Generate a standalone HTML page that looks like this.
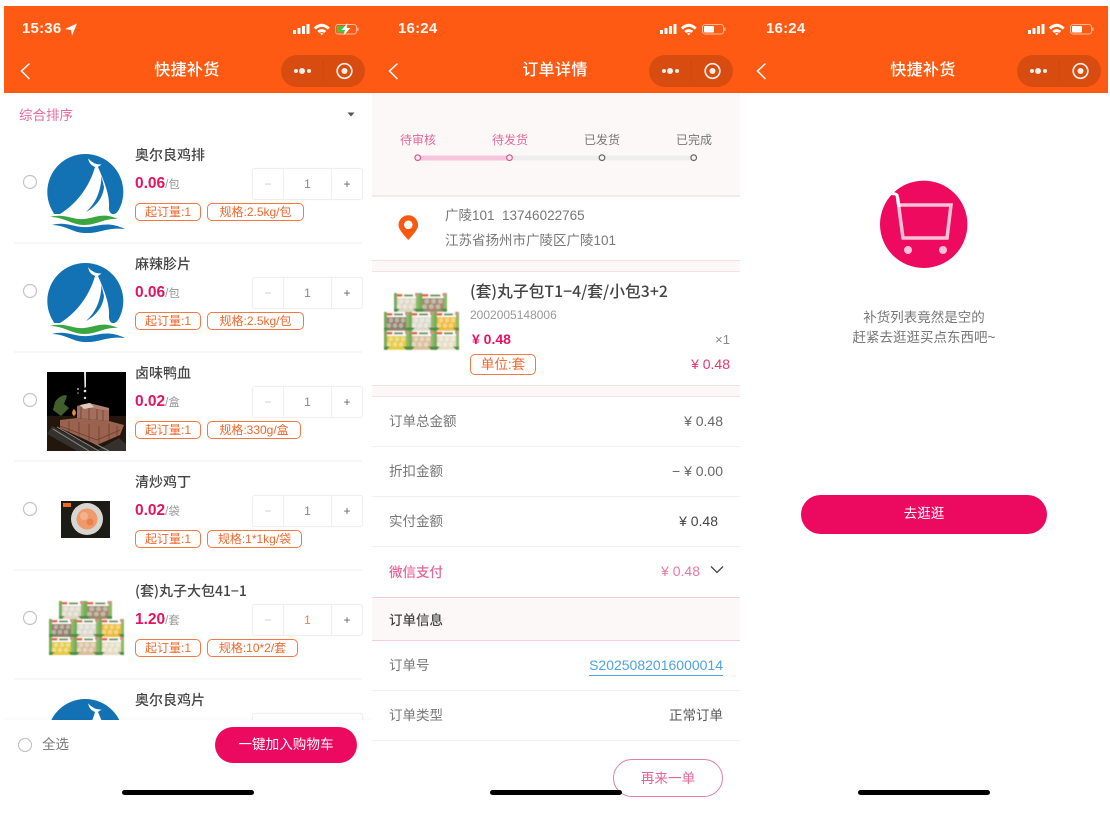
<!DOCTYPE html>
<html lang="zh"><head><meta charset="utf-8"><title>快捷补货</title>
<style>
html,body{margin:0;padding:0;background:#fff}
body{position:relative;width:1110px;height:815px;overflow:hidden;font-family:"Liberation Sans","Noto Sans CJK SC",sans-serif}
.a{position:absolute}
.t{position:absolute;white-space:nowrap;line-height:20px;height:20px}
.m{font-family:"Noto Sans CJK SC","Liberation Sans",sans-serif;font-weight:500}
.hd{position:absolute;top:6px;height:87px;background:#fe5a13}
.title{position:absolute;top:61px;width:120px;text-align:center;color:#fff;font-size:16px;line-height:20px;font-weight:500;letter-spacing:.4px}
.time{position:absolute;top:19px;color:#fff;font-size:15px;line-height:20px;font-weight:700;letter-spacing:.2px;opacity:.95}
.row{position:absolute;left:0;width:372px;height:109px}
.name{position:absolute;left:135px;top:145px;line-height:20px;font-size:14px;color:#444;white-space:nowrap;font-family:"Noto Sans CJK SC","Liberation Sans",sans-serif;font-weight:500}
.price{position:absolute;left:135px;top:174px;line-height:20px;font-size:15.500px;font-weight:700;color:#e5135f;white-space:nowrap}
.price span{font-size:11.500px;font-weight:400;color:#999}
.tag{position:absolute;top:203px;height:16px;line-height:16px;border:1.200px solid #ef7a45;border-radius:5px;color:#f0672c;font-size:12px;text-align:center;white-space:nowrap}
.st{position:absolute;left:252px;top:168px;width:109px;height:30px;border:1px solid #efefef;border-radius:3px;box-shadow:0 0 1px #f0f0f0}
.st i{position:absolute;top:0;bottom:0;width:1px;background:#efefef}
.st b{position:absolute;top:0;line-height:30px;font-weight:400;font-size:12px;text-align:center}
.line{position:absolute;left:14px;width:348px;height:2px;background:#f7f7f7;top:242px}
.sep{position:absolute;left:372px;width:368px;height:1px}
.lb{position:absolute;left:389px;font-size:13.500px;line-height:20px;color:#777;white-space:nowrap;margin-top:1px}
.rt{position:absolute;font-size:14px;line-height:20px;color:#666;white-space:nowrap;text-align:right}
.step{position:absolute;top:130px;width:60px;text-align:center;font-size:12px;line-height:20px}
.bar{position:absolute;top:790px;width:132px;height:5px;border-radius:3px;background:#000}
</style></head><body>

<div class="hd" style="left:4px;width:368px"></div>
<div class="hd" style="left:372px;width:368px"></div>
<div class="hd" style="left:740px;width:368px"></div>

<!-- panel 2 tinted backgrounds -->
<div class="a" style="left:372px;top:93px;width:368px;height:103px;background:#fdf8f8"></div>
<div class="sep" style="top:195px;height:2px;background:#f9e6ea"></div>
<div class="a" style="left:372px;top:261px;width:368px;height:10px;background:#fdf8f8"></div>
<div class="sep" style="top:260px;background:#f6dfe5"></div>
<div class="sep" style="top:271px;background:#f6dfe5"></div>
<div class="a" style="left:372px;top:386px;width:368px;height:10px;background:#fdf8f8"></div>
<div class="sep" style="top:385px;background:#f6dfe5"></div>
<div class="sep" style="top:396px;background:#f6dfe5"></div>
<div class="sep" style="top:446px;background:#f0f0f0"></div>
<div class="sep" style="top:496px;background:#f0f0f0"></div>
<div class="sep" style="top:546px;background:#f0f0f0"></div>
<div class="a" style="left:372px;top:597px;width:368px;height:44px;background:#fdf8f8"></div>
<div class="sep" style="top:597px;background:#f7cdd9"></div>
<div class="sep" style="top:640px;background:#f7cdd9"></div>
<div class="sep" style="top:690px;background:#f0f0f0"></div>
<div class="sep" style="top:740px;background:#f0f0f0"></div>

<!-- graphics -->
<svg class="a" style="left:0;top:0" width="1110" height="815" viewBox="0 0 1110 815">
<defs>
<filter id="bl" x="-5%" y="-5%" width="110%" height="110%"><feGaussianBlur stdDeviation=".5"/></filter>
<filter id="bl2" x="-2%" y="-2%" width="104%" height="104%"><feGaussianBlur stdDeviation=".35"/></filter>
<g id="cap">
  <rect x="281" y="55" width="84" height="32" rx="16" fill="#000" opacity=".15"/>
  <rect x="322.500" y="60" width="1" height="22" fill="#000" opacity=".06"/>
  <circle cx="296" cy="71" r="2" fill="#fff" opacity=".9"/><circle cx="302" cy="71" r="3" fill="#fff" opacity=".9"/><circle cx="309" cy="71" r="2" fill="#fff" opacity=".9"/>
  <circle cx="344.500" cy="71" r="7.300" fill="none" stroke="#fff" stroke-width="1.700" opacity=".9"/><circle cx="344.500" cy="71" r="3" fill="#fff" opacity=".9"/>
  <path d="M29.500 63.500 L21.500 71 L29.500 79" fill="none" stroke="#fff" stroke-width="1.500"/>
</g>
<g id="sig">
  <rect x="293" y="30" width="3" height="4" rx=".5" fill="#fff"/><rect x="297.500" y="28" width="3" height="6" rx=".5" fill="#fff"/><rect x="302" y="26" width="3" height="8" rx=".5" fill="#fff"/><rect x="306.500" y="24" width="3" height="10" rx=".5" fill="#fff"/>
  <path d="M313.800 27.500 C319 22.500 324.500 22.500 329.700 27.500 L327.700 29.600 C323.500 26 320 26 315.800 29.600 Z M317.300 31 C320 28.500 323.500 28.500 326.200 31 L324.300 32.900 C323 31.800 320.500 31.800 319.200 32.900 Z M320.100 33.500 C321 32.800 322.500 32.800 323.400 33.500 L321.750 35.300 Z" fill="#fff"/>
</g>
<g id="logo">
  <circle cx="39.300" cy="39" r="38" fill="#1272b4"/>
  <path d="M49 14 C44 32 32 50 14 61 L0 61 L0 80 L80 80 L80 50 L72 58 C69 63 63 62 63 55 C64 42 58 28 52 14 Z" fill="#fff"/>
  <path d="M55.500 23 C55 38 50 50 40 59 C48 55 57 46 58 34 Z" fill="#1272b4"/>
  <path d="M43 7 C44 11 47 13 51 14 L54 12 C50 12 46 10 43 7 Z" fill="#fff" stroke="#fff"/>
  <path d="M4 64 C18 60 26 67 38 66 C50 65 56 59 72 66 C58 65 52 72 38 72 C26 72 18 64 4 64 Z" fill="#3ba63f"/>
  <path d="M6 72 C20 68 28 75 42 74 C54 73 62 68 79 76 C62 74 54 80 42 80 C28 81 20 72 6 72 Z" fill="#1272b4"/>
</g>
<g id="tile">
  <rect x="0" y="4" width="25" height="14"/>
  <rect x="2" y="0" width="21" height="5" fill="#fbfbf6"/>
  <path d="M0 0 H3 V18 H0 Z" fill="#74ad5a"/><path d="M22 0 H25 V18 H22 Z" fill="#8bbb68"/>
  <path d="M0 15 H6 L3 18 H0 Z M19 15 H25 V18 H22 Z" fill="#4f8f45"/>
  <rect x="2.500" y="1" width="6" height="2.500" rx="1" fill="#e5603e"/>
  <rect x="10" y="1.500" width="9" height="1.800" fill="#5f8f55"/>
  <rect x="21" y="0" width="3" height="3" fill="#dc8a8a"/>
  <g fill="#fff" opacity=".4"><circle cx="7" cy="8" r="2.300"/><circle cx="13" cy="8" r="2.300"/><circle cx="19" cy="8" r="2.300"/><circle cx="5" cy="13" r="2.300"/><circle cx="11" cy="13" r="2.300"/><circle cx="17" cy="13" r="2.300"/></g>
</g>
<g id="pack" filter="url(#bl)">
  <g transform="translate(10,0)"><use href="#tile" fill="#ddd6c4"/></g>
  <g transform="translate(35,0) scale(1.120,1)"><use href="#tile" fill="#a08a6e"/></g>
  <g transform="translate(0,18)"><use href="#tile" fill="#8f7f6a"/></g>
  <g transform="translate(25,18)"><use href="#tile" fill="#dcd8cc"/></g>
  <g transform="translate(50,18)"><use href="#tile" fill="#efb938"/></g>
  <g transform="translate(0,36)"><use href="#tile" fill="#e5c93f"/></g>
  <g transform="translate(25,36)"><use href="#tile" fill="#d8bd98"/></g>
  <g transform="translate(50,36)"><use href="#tile" fill="#e6dcc4"/></g>
</g>
</defs>

<use href="#cap"/><use href="#cap" x="368"/><use href="#cap" x="736"/>
<use href="#sig"/><use href="#sig" x="367"/><use href="#sig" x="735"/>

<!-- battery 1 -->
<rect x="335.500" y="24.500" width="21" height="9.500" rx="2.500" fill="none" stroke="#fff" stroke-opacity=".6"/>
<rect x="337" y="26" width="11" height="6.500" rx="1" fill="#4cc13f"/>
<rect x="357.200" y="27.500" width="1.300" height="3.500" rx=".6" fill="#fff" opacity=".6"/>
<path d="M347.500 23 L341.500 30 H345 L343.500 35.500 L350.500 28 H346.700 Z" fill="#fff"/>
<!-- battery 2, 3 -->
<rect x="702.500" y="24.500" width="21" height="9.500" rx="2.500" fill="none" stroke="#fff" stroke-opacity=".6"/>
<rect x="704" y="26" width="10" height="6.500" rx="1" fill="#fff"/>
<rect x="724.200" y="27.500" width="1.300" height="3.500" rx=".6" fill="#fff" opacity=".6"/>
<rect x="1070.500" y="24.500" width="21" height="9.500" rx="2.500" fill="none" stroke="#fff" stroke-opacity=".6"/>
<rect x="1072" y="26" width="10" height="6.500" rx="1" fill="#fff"/>
<rect x="1092.200" y="27.500" width="1.300" height="3.500" rx=".6" fill="#fff" opacity=".6"/>
<!-- location arrow -->
<path d="M77 23.500 L65 29 L71 30 L72 35.500 Z" fill="#fff"/>

<!-- sort caret -->
<path d="M347.500 112.500 H354.500 L351 116.500 Z" fill="#555"/>

<!-- radios -->
<g fill="#fff" stroke="#c4c4c4" stroke-width="1.200">
<circle cx="30" cy="182" r="6.500"/><circle cx="30" cy="291" r="6.500"/><circle cx="30" cy="400" r="6.500"/><circle cx="30" cy="509" r="6.500"/><circle cx="30" cy="618" r="6.500"/>
</g>

<!-- product images -->
<use href="#logo" x="46" y="153"/>
<use href="#logo" x="46" y="262"/>
<use href="#logo" x="46" y="698"/>

<!-- duck blood -->
<g transform="translate(47,372)" filter="url(#bl2)">
  <rect width="79" height="79" fill="#060403"/>
  <rect x="0" y="44" width="79" height="35" fill="#241208"/>
  <path d="M8 30 C12 24 18 22 20 24 L17 32 L22 36 L14 44 L6 38 Z" fill="#3f5f2a"/>
  <path d="M5 54 L50 78 L72 66 L79 72 L79 79 L30 79 L0 62 Z" fill="#35302e"/>
  <path d="M6 57 L42 79 M10 55 L52 79 M16 55 L62 79" stroke="#8f8f90" stroke-width="1" fill="none"/>
  <path d="M13 48 L30 46 L62 49 L77 53 L73 63 L50 73 L13 56 Z" fill="#9a6350"/>
  <path d="M30 34 L62 39 L62 49 L30 46 Z" fill="#a36e5b"/>
  <path d="M30 34 L42 31 L62 36 L62 39 Z" fill="#b58270"/>
  <path d="M34 35 L34 47 M42 36 L42 48 M50 37 L50 48 M56 38 L56 49 M22 49 L22 60 M32 50 L32 65 M42 52 L42 70 M52 54 L52 72 M62 52 L62 68 M70 54 L70 64" stroke="#6c3f30" stroke-width=".8" fill="none"/>
  <path d="M13 54 L50 68 L73 58" stroke="#6c3f30" stroke-width=".8" fill="none"/>
  <path d="M33 33 L43 31 L47 35 L37 37 Z" fill="#dcccc0"/>
  <path d="M37 0 L39 0 L39 15 L37.500 16 Z" fill="#e8e8e8"/>
  <circle cx="38" cy="19" r="1.300" fill="#e8e8e8"/><circle cx="31" cy="17" r="1" fill="#aaa"/><circle cx="31" cy="21" r=".8" fill="#aaa"/><circle cx="38" cy="26" r="1.200" fill="#ddd"/>
  <path d="M27 37 C29 39 30 42 27 44 C24 42 25 39 27 37Z" fill="#f08a3a"/>
</g>
<!-- chicken -->
<g filter="url(#bl2)">
  <rect x="61" y="501" width="49" height="37" fill="#1d1a18"/>
  <circle cx="87" cy="519" r="16" fill="#d9d6d2"/>
  <circle cx="87" cy="519" r="10.500" fill="#ee9a6c"/>
  <circle cx="84" cy="516" r="4" fill="#f2b38c"/><circle cx="90" cy="522" r="3.500" fill="#e8824e"/>
  <rect x="63" y="503" width="8" height="4" fill="#f26a1e"/>
</g>
<use href="#pack" x="49" y="601"/>
<use href="#pack" transform="translate(384,293) scale(1,1.050)"/>

<!-- steps -->
<rect x="418" y="155.500" width="91" height="5" fill="#f8c6da"/>
<rect x="509" y="155.500" width="185" height="5" fill="#eee"/>
<g fill="#fbeaf0" stroke="#e0588f" stroke-width="1.200"><circle cx="417.700" cy="157.700" r="2.800"/><circle cx="509.500" cy="157.700" r="2.800"/></g>
<g fill="#f7f7f7" stroke="#666" stroke-width="1.200"><circle cx="602" cy="157.700" r="2.800"/><circle cx="693.700" cy="157.700" r="2.800"/></g>

<!-- pin -->
<path fill-rule="evenodd" d="M408.300 240 C402 233 398.500 229 398.500 225 A9.800 9.800 0 0 1 418.100 225 C418.100 229 414.600 233 408.300 240 Z M408.300 220.500 A4.300 4.300 0 1 0 408.300 229.100 A4.300 4.300 0 1 0 408.300 220.500 Z" fill="#f8590f"/>

<!-- chevron -->
<path d="M711 566.500 L717 572.500 L723 566.500" fill="none" stroke="#444" stroke-width="1.300"/>

<!-- empty cart -->
<circle cx="923.700" cy="224.300" r="43.700" fill="#ee0a5f"/>
<path d="M897.500 197 L903 238 H947 L951 205 H899" fill="none" stroke="#fff" stroke-opacity=".75" stroke-width="3.500"/>
<path d="M887 194 C891 193.500 895 193 897 195 L899 207" fill="none" stroke="#fff" stroke-width="3"/>
<circle cx="908" cy="250" r="4" fill="#fff" fill-opacity=".75"/><circle cx="943" cy="250" r="4" fill="#fff" fill-opacity=".75"/>
</svg>

<!-- status + nav text -->
<div class="time" style="left:22px">15:36</div>
<div class="time" style="left:398px">16:24</div>
<div class="time" style="left:766px">16:24</div>
<div class="title" style="left:127px">快捷补货</div>
<div class="title" style="left:495px">订单详情</div>
<div class="title" style="left:863px">快捷补货</div>

<!-- panel 1 -->
<div class="t" style="left:19px;top:106px;font-size:13.500px;color:#e56aa0">综合排序</div>

<div class="row" style="top:0">
  <div class="name">奥尔良鸡排</div><div class="price">0.06<span>/包</span></div>
  <div class="tag" style="left:135px;width:64px">起订量:1</div><div class="tag" style="left:207px;width:95px">规格:2.5kg/包</div>
  <div class="st"><i style="left:30px"></i><i style="left:78px"></i><b style="left:0;width:30px;color:#ccc">−</b><b style="left:31px;width:47px;color:#888">1</b><b style="left:79px;width:30px;color:#666">+</b></div>
  <div class="line"></div>
</div>
<div class="row" style="top:109px">
  <div class="name">麻辣胗片</div><div class="price">0.06<span>/包</span></div>
  <div class="tag" style="left:135px;width:64px">起订量:1</div><div class="tag" style="left:207px;width:95px">规格:2.5kg/包</div>
  <div class="st"><i style="left:30px"></i><i style="left:78px"></i><b style="left:0;width:30px;color:#ccc">−</b><b style="left:31px;width:47px;color:#888">1</b><b style="left:79px;width:30px;color:#666">+</b></div>
  <div class="line"></div>
</div>
<div class="row" style="top:218px">
  <div class="name">卤味鸭血</div><div class="price">0.02<span>/盒</span></div>
  <div class="tag" style="left:135px;width:64px">起订量:1</div><div class="tag" style="left:207px;width:92px">规格:330g/盒</div>
  <div class="st"><i style="left:30px"></i><i style="left:78px"></i><b style="left:0;width:30px;color:#ccc">−</b><b style="left:31px;width:47px;color:#888">1</b><b style="left:79px;width:30px;color:#666">+</b></div>
  <div class="line"></div>
</div>
<div class="row" style="top:327px">
  <div class="name">清炒鸡丁</div><div class="price">0.02<span>/袋</span></div>
  <div class="tag" style="left:135px;width:64px">起订量:1</div><div class="tag" style="left:207px;width:93px">规格:1*1kg/袋</div>
  <div class="st"><i style="left:30px"></i><i style="left:78px"></i><b style="left:0;width:30px;color:#ccc">−</b><b style="left:31px;width:47px;color:#888">1</b><b style="left:79px;width:30px;color:#666">+</b></div>
  <div class="line"></div>
</div>
<div class="row" style="top:436px">
  <div class="name">(套)丸子大包41−1</div><div class="price">1.20<span>/套</span></div>
  <div class="tag" style="left:135px;width:64px">起订量:1</div><div class="tag" style="left:207px;width:89px">规格:10*2/套</div>
  <div class="st"><i style="left:30px"></i><i style="left:78px"></i><b style="left:0;width:30px;color:#ccc">−</b><b style="left:31px;width:47px;color:#e8853f">1</b><b style="left:79px;width:30px;color:#666">+</b></div>
  <div class="line"></div>
</div>
<div class="row" style="top:545px">
  <div class="name">奥尔良鸡片</div>
  <div class="st"></div>
</div>

<!-- bottom bar -->
<div class="a" style="left:4px;top:716px;width:368px;height:4px;background:linear-gradient(rgba(0,0,0,0),rgba(0,0,0,.02))"></div>
<div class="a" style="left:0;top:720px;width:372px;height:95px;background:#fff"></div>
<svg class="a" style="left:15px;top:735px" width="20" height="20"><circle cx="10" cy="10" r="6.500" fill="#fff" stroke="#c4c4c4" stroke-width="1.200"/></svg>
<div class="t" style="left:42px;top:735px;font-size:13.500px;color:#777">全选</div>
<div class="a" style="left:215px;top:727px;width:142px;height:36px;line-height:36px;border-radius:18px;background:#ec0a60;color:#fff;font-size:13.600px;text-align:center">一键加入购物车</div>

<!-- panel 2 text -->
<div class="step" style="left:388px;color:#e06a9a">待审核</div>
<div class="step" style="left:480px;color:#e06a9a">待发货</div>
<div class="step" style="left:572px;color:#777">已发货</div>
<div class="step" style="left:664px;color:#777">已完成</div>
<div class="t" style="left:445px;top:206px;font-size:13.500px;color:#777">广陵101&nbsp;&nbsp;13746022765</div>
<div class="t" style="left:445px;top:231px;font-size:13.500px;color:#777">江苏省扬州市广陵区广陵101</div>
<div class="t m" style="left:470px;top:281px;font-size:15.800px;color:#444">(套)丸子包T1−4/套/小包3+2</div>
<div class="t" style="left:470px;top:305px;font-size:12px;color:#999">2002005148006</div>
<div class="t" style="left:472px;top:329px;font-size:14px;color:#e5135f;font-weight:700">¥ 0.48</div>
<div class="rt" style="right:380px;top:330px;font-size:13px;color:#888">×1</div>
<div class="a" style="left:470px;top:354px;width:64px;height:19px;line-height:19px;border:1.200px solid #ef7a45;border-radius:5px;color:#f0672c;font-size:13.500px;text-align:center">单位:套</div>
<div class="rt" style="right:380px;top:354px;color:#e5356f">¥ 0.48</div>

<div class="lb" style="top:411px">订单总金额</div><div class="rt" style="right:387px;top:411px">¥ 0.48</div>
<div class="lb" style="top:461px">折扣金额</div><div class="rt" style="right:387px;top:461px">− ¥ 0.00</div>
<div class="lb" style="top:511px">实付金额</div><div class="rt" style="right:392px;top:511px;color:#444">¥ 0.48</div>
<div class="lb m" style="top:560px;color:#e5659a">微信支付</div><div class="rt" style="right:410px;top:561px;color:#e878a5">¥ 0.48</div>
<div class="lb m" style="top:608px;color:#444">订单信息</div>
<div class="lb" style="top:655px">订单号</div>
<div class="rt" style="right:387px;top:655px;color:#4ea3e0;border-bottom:1px solid #4ea3e0;height:20px">S2025082016000014</div>
<div class="lb" style="top:705px">订单类型</div><div class="rt" style="right:387px;top:706px;font-size:13.500px;color:#555">正常订单</div>
<div class="a" style="left:613px;top:759px;width:108px;height:36px;line-height:37px;border:1px solid #e37fa4;border-radius:19px;color:#e5659a;font-size:13.600px;text-align:center;background:#fff">再来一单</div>

<!-- panel 3 text -->
<div class="t" style="left:824px;width:200px;text-align:center;top:308px;font-size:13.500px;color:#777">补货列表竟然是空的</div>
<div class="t" style="left:824px;width:200px;text-align:center;top:328px;font-size:13.500px;color:#777">赶紧去逛逛买点东西吧~</div>
<div class="a" style="left:801px;top:495px;width:246px;height:39px;line-height:38px;border-radius:20px;background:#ec0a60;color:#fff;font-size:13.600px;text-align:center">去逛逛</div>

<div class="bar" style="left:122px"></div>
<div class="bar" style="left:490px"></div>
<div class="bar" style="left:858px"></div>
</body></html>
